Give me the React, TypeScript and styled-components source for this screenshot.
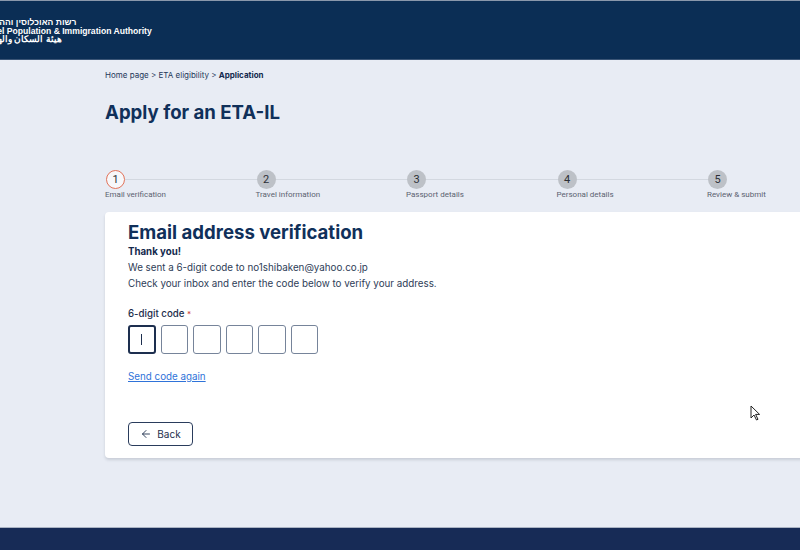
import styled, { createGlobalStyle } from "styled-components";
import { ArrowLeft } from "lucide-react";

const steps = [
  "Email verification",
  "Travel information",
  "Passport details",
  "Personal details",
  "Review & submit",
];

export default function App() {
  return (
    <Page>
      <GlobalStyle />
      <Header>
        <Logo>
          <LogoLine dir="rtl">רשות האוכלוסין וההגירה</LogoLine>
          <LogoLine $strong>Israel Population &amp; Immigration Authority</LogoLine>
          <LogoLine dir="rtl">هيئة السكان والهجرة</LogoLine>
        </Logo>
      </Header>

      <Main>
        <Breadcrumb>
          Home page &gt; ETA eligibility &gt; <b>Application</b>
        </Breadcrumb>
        <Title>Apply for an ETA-IL</Title>

        <Stepper>
          {steps.map((label, i) => (
            <Step key={label}>
              <StepTrack>
                <Circle $active={i === 0}>{i + 1}</Circle>
                {i < steps.length - 1 && <Connector />}
              </StepTrack>
              <StepLabel>{label}</StepLabel>
            </Step>
          ))}
        </Stepper>

        <Card>
          <CardTitle>Email address verification</CardTitle>
          <Strong>Thank you!</Strong>
          <Text>We sent a 6-digit code to no1shibaken@yahoo.co.jp</Text>
          <Text>Check your inbox and enter the code below to verify your address.</Text>

          <FieldLabel>
            6-digit code <Req>*</Req>
          </FieldLabel>
          <CodeRow>
            {[0, 1, 2, 3, 4, 5].map((n) => (
              <CodeBox key={n} $focused={n === 0}>
                {n === 0 && <Caret />}
              </CodeBox>
            ))}
          </CodeRow>

          <ResendLink href="#">Send code again</ResendLink>

          <BackButton type="button">
            <ArrowLeft size={12} strokeWidth={1.8} />
            Back
          </BackButton>

          <Pointer width="11" height="16" viewBox="0 0 11 16">
            <path
              d="M1 1 L1 13 L4 10 L6.5 15 L8 14.3 L5.6 9.4 L9.6 9.4 Z"
              fill="#fff"
              stroke="#222"
              strokeWidth="1"
              strokeLinejoin="round"
            />
          </Pointer>
        </Card>
      </Main>

      <Footer />
    </Page>
  );
}

const GlobalStyle = createGlobalStyle`
  html, body {
    margin: 0;
    padding: 0;
    overflow: hidden;
    background: #e8ecf4;
  }
  * { box-sizing: border-box; }
`;

const Page = styled.div`
  display: flex;
  flex-direction: column;
  height: 550px;
  font-family: Inter, "Noto Sans", sans-serif;
  color: #1b2d4b;
  background: #e8ecf4;
`;

const Header = styled.header`
  height: 60px;
  background: #0b2e55;
  border-top: 1px solid #8a98ab;
  border-bottom: 1px solid #3b5576;
  display: flex;
  align-items: center;
  overflow: hidden;
`;

const Logo = styled.div`
  display: flex;
  flex-direction: column;
  margin-left: -18px;
  padding-top: 2px;
  color: #fff;
  font-family: "Liberation Sans", Arial, sans-serif;
`;

const LogoLine = styled.div<{ $strong?: boolean }>`
  font-size: ${(p) => (p.$strong ? "8.6px" : "8.6px")};
  font-weight: 700;
  line-height: 8.4px;
  text-align: left;
  unicode-bidi: plaintext;
  direction: ltr;
  white-space: nowrap;
`;

const Main = styled.main`
  flex: 1;
  padding-left: 105px;
  display: flex;
  flex-direction: column;
`;

const Breadcrumb = styled.div`
  margin-top: 9px;
  font-size: 8px;
  line-height: 12px;
  color: #25385a;

  b {
    font-weight: 700;
    color: #13294d;
  }
`;

const Title = styled.h1`
  margin: 19px 0 0;
  font-size: 18.6px;
  line-height: 24px;
  font-weight: 700;
  color: #10305a;
`;

const Stepper = styled.div`
  margin-top: 46px;
  display: grid;
  grid-template-columns: repeat(5, 150.5px);
  padding-left: 1px;
`;

const Step = styled.div`
  display: flex;
  flex-direction: column;
`;

const StepTrack = styled.div`
  display: flex;
  align-items: center;
`;

const Circle = styled.div<{ $active?: boolean }>`
  width: 19px;
  height: 19px;
  border-radius: 50%;
  flex: none;
  display: flex;
  align-items: center;
  justify-content: center;
  font-family: Roboto, sans-serif;
  font-size: 11px;
  color: #2b2f36;
  background: ${(p) => (p.$active ? "#f7f8fa" : "#bdc1c7")};
  border: ${(p) => (p.$active ? "1px solid #e2735a" : "none")};
`;

const Connector = styled.div`
  flex: 1;
  height: 1px;
  background: #d3d8e0;
`;

const StepLabel = styled.div`
  margin-top: 0;
  margin-left: -1px;
  font-family: Roboto, sans-serif;
  font-size: 8px;
  line-height: 11px;
  color: #5b6270;
`;

const Card = styled.section`
  position: relative;
  margin-top: 12px;
  width: 730px;
  height: 246px;
  background: #fff;
  border-radius: 4px;
  box-shadow: 0 2px 3px rgba(40, 50, 70, 0.16);
  padding: 9px 23px 0;
  display: flex;
  flex-direction: column;
  align-items: flex-start;
`;

const CardTitle = styled.h2`
  margin: 0;
  font-size: 18.6px;
  line-height: 22px;
  font-weight: 700;
  color: #10305a;
`;

const Strong = styled.div`
  margin-top: 2px;
  font-size: 9.7px;
  line-height: 14px;
  font-weight: 700;
  color: #13294d;
`;

const Text = styled.div`
  margin-top: 2px;
  font-size: 9.8px;
  line-height: 14px;
  color: #2e3d57;
`;

const FieldLabel = styled.div`
  margin-top: 16px;
  font-size: 9.7px;
  line-height: 14px;
  font-weight: 500;
  color: #1b2d4b;
`;

const Req = styled.span`
  color: #d0453a;
  font-size: 8px;
`;

const CodeRow = styled.div`
  margin-top: 4px;
  display: flex;
  gap: 5px;
`;

const CodeBox = styled.div<{ $focused?: boolean }>`
  width: 27.5px;
  height: 29px;
  border-radius: 3px;
  border: ${(p) => (p.$focused ? "2px solid #1d2f4f" : "1px solid #76849a")};
  display: flex;
  align-items: center;
  justify-content: center;
`;

const Caret = styled.div`
  width: 1px;
  height: 11px;
  background: #1d2f4f;
`;

const ResendLink = styled.a`
  margin-top: 16px;
  font-size: 9.8px;
  line-height: 14px;
  color: #2f73d9;
  text-decoration: underline;
`;

const BackButton = styled.button`
  margin-top: 38px;
  width: 65px;
  height: 24px;
  display: flex;
  align-items: center;
  justify-content: center;
  gap: 5px;
  background: #fff;
  border: 1px solid #2a3c5c;
  border-radius: 4px;
  font-family: Inter, sans-serif;
  font-size: 10px;
  color: #1e2f4d;
  padding: 0;
`;

const Pointer = styled.svg`
  position: absolute;
  left: 645px;
  top: 193px;
`;

const Footer = styled.footer`
  height: 23px;
  background: #172b56;
  border-top: 1px solid #aab3c3;
`;
